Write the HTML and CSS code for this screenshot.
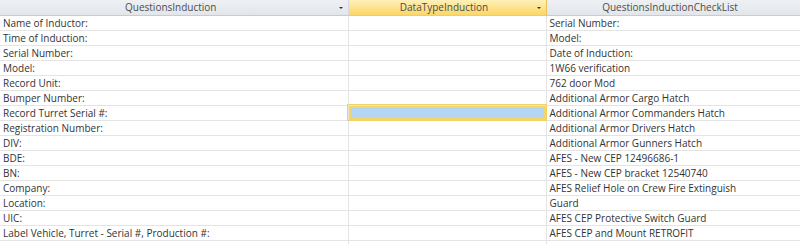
FILE: index.html
```html
<!DOCTYPE html>
<html lang="en">

<head>
    <meta charset="UTF-8">
    <title>Datasheet</title>
    <link rel="stylesheet" href="styles.css">
</head>

<body>
    <table class="sheet">
        <colgroup>
            <col class="c1">
            <col class="c2">
            <col class="c3">
        </colgroup>
        <thead>
            <tr>
                <th><span>QuestionsInduction</span><i class="arrow"></i></th>
                <th class="active"><span>DataTypeInduction</span><i class="arrow"></i></th>
                <th><span>QuestionsInductionCheckList</span><i class="arrow"></i></th>
            </tr>
        </thead>
        <tbody>
            <tr><td>Name of Inductor:</td><td></td><td>Serial Number:</td></tr>
            <tr><td>Time of Induction:</td><td></td><td>Model:</td></tr>
            <tr><td>Serial Number:</td><td></td><td>Date of Induction:</td></tr>
            <tr><td>Model:</td><td></td><td>1W66 verification</td></tr>
            <tr><td>Record Unit:</td><td></td><td>762 door Mod</td></tr>
            <tr><td>Bumper Number:</td><td></td><td>Additional Armor Cargo Hatch</td></tr>
            <tr><td>Record Turret Serial #:</td><td class="selected"></td><td>Additional Armor Commanders Hatch</td></tr>
            <tr><td>Registration Number:</td><td></td><td>Additional Armor Drivers Hatch</td></tr>
            <tr><td>DIV:</td><td></td><td>Additional Armor Gunners Hatch</td></tr>
            <tr><td>BDE:</td><td></td><td>AFES - New CEP 12496686-1</td></tr>
            <tr><td>BN:</td><td></td><td>AFES - New CEP bracket 12540740</td></tr>
            <tr><td>Company:</td><td></td><td>AFES Relief Hole on Crew Fire Extinguish</td></tr>
            <tr><td>Location:</td><td></td><td>Guard</td></tr>
            <tr><td>UIC:</td><td></td><td>AFES CEP Protective Switch Guard</td></tr>
            <tr><td>Label Vehicle, Turret - Serial #, Production #:</td><td></td><td>AFES CEP and Mount RETROFIT</td></tr>
            <tr><td>Date Turret Issued To:</td><td>Yes/No Status</td><td>AFES</td></tr>
        </tbody>
    </table>
</body>

</html>
```

FILE: styles.css
```css
* {
    margin: 0;
    padding: 0;
    box-sizing: border-box;
}

body {
    background: #fff;
    overflow: hidden;
    font-family: "Open Sans", "Liberation Sans", sans-serif;
    font-size: 10px;
    color: #333;
}

.sheet {
    width: 1000px;
    border-collapse: collapse;
    table-layout: fixed;
}

.c1 {
    width: 348px;
}

.c2 {
    width: 198px;
}

.c3 {
    width: 454px;
}

th {
    position: relative;
    height: 15px;
    font-weight: normal;
    color: #4c4c4c;
    text-align: center;
    border-right: 1px solid #d5dae0;
    border-bottom: 1px solid #c6ccd4;
    background: linear-gradient(#eef0f3, #e2e6eb);
}

th span {
    display: block;
    line-height: 14px;
    padding-right: 6px;
}

th.active {
    background: linear-gradient(#fef0b8, #fbd666);
    border-right-color: #e8c257;
}

.sheet th:nth-child(3) span {
    margin-right: 200px;
}

.arrow {
    position: absolute;
    right: 5px;
    top: 7px;
    width: 0;
    height: 0;
    border-left: 2px solid transparent;
    border-right: 2px solid transparent;
    border-top: 2px solid #333;
}

td {
    height: 15px;
    line-height: 14px;
    padding: 0 3px;
    white-space: nowrap;
    overflow: hidden;
    border-right: 1px solid #e4e4e4;
    border-bottom: 1px solid #e4e4e4;
}

td.selected {
    background: #b6d4f4;
    outline: 1px solid #f0d26a;
    box-shadow: inset 0 0 0 2px #f3d56c;
}
```
